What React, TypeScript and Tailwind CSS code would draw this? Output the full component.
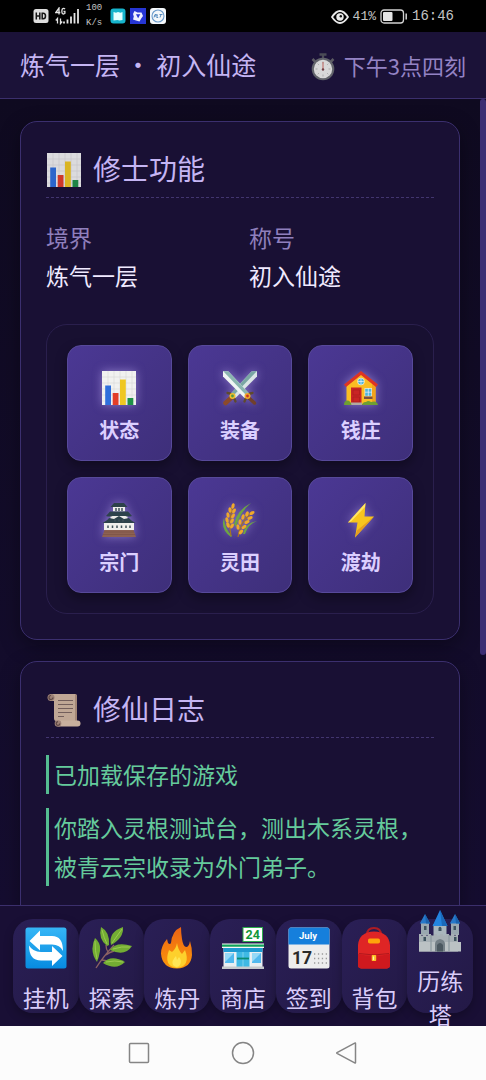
import React from "react";

type IconProps = { className?: string };

function ChartIcon({ className }: IconProps) {
  return (
    <svg viewBox="0 0 36 36" className={className} aria-hidden="true">
      <rect x="1" y="1" width="34" height="34" fill="#f1f1f0" />
      <path d="M7 1v34M13 1v34M19 1v34M25 1v34M31 1v34M1 7h34M1 13h34M1 19h34M1 25h34M1 31h34" stroke="#dadada" strokeWidth="0.700" />
      <rect x="4.200" y="15.500" width="5.800" height="19.500" fill="#2f6fdc" />
      <rect x="11.700" y="23" width="5.800" height="12" fill="#e23d28" />
      <rect x="19" y="9.500" width="5.800" height="25.500" fill="#efc722" />
      <rect x="26.500" y="28" width="5.800" height="7" fill="#1f9147" />
    </svg>
  );
}

function ScrollIcon({ className }: IconProps) {
  return (
    <svg viewBox="0 0 36 36" className={className} aria-hidden="true">
      <path d="M4 2h25q2 0 2 3v24H10q-2 0-2-3V9H4z" fill="#d3b8a0" />
      <path d="M29 2q2 0 2 3v24h-2z" fill="#b3947f" />
      <circle cx="5" cy="5.500" r="3.500" fill="#a98c7c" />
      <path d="M5 3.500a2 2 0 1 0 2 2" fill="none" stroke="#654d46" strokeWidth="1.200" />
      <path d="M12 8.500h15M12 12.500h15M12 16.500h15M12 20.500h14M12 24.500h6" stroke="#7d6760" strokeWidth="1.200" />
      <rect x="10" y="28.500" width="24.500" height="6" rx="3" fill="#dcc2aa" />
      <circle cx="12" cy="31.500" r="3.300" fill="#ad8f7e" />
      <path d="M12 29.700a1.800 1.800 0 1 0 1.800 1.800" fill="none" stroke="#654d46" strokeWidth="1.200" />
    </svg>
  );
}

function SwordsIcon({ className }: IconProps) {
  return (
    <svg viewBox="0 0 36 36" className={className} aria-hidden="true">
      <path d="M35 1v5.500L13.500 28 9 23.500 29.500 1.500z" fill="#dbe6e6" />
      <path d="M35 1l-5.500.5L9 23.500l2.300 2.300z" fill="#7aa7a4" />
      <path d="M1 1v5.500L22.500 28l4.500-4.500L6.500 1.500z" fill="#f0f5f4" />
      <path d="M1 1l5.500.5L27 23.500l-2.300 2.300z" fill="#8ab5b0" />
      <path d="M9 28l-5.500 5" stroke="#8c4a2b" strokeWidth="4.500" strokeLinecap="round" />
      <path d="M27 28l5.500 5" stroke="#71402b" strokeWidth="3.500" strokeLinecap="round" />
      <path d="M5.500 23q5 0 8 8.500M30.500 23q-5 0-8 8.500" fill="none" stroke="#5f4a2c" strokeWidth="2.300" strokeLinecap="round" />
      <circle cx="10.500" cy="26" r="3" fill="#f0bd2e" />
      <circle cx="25.500" cy="26" r="3" fill="#f0a82e" />
      <circle cx="10.500" cy="26" r="1.400" fill="#4d9b48" />
      <circle cx="25.500" cy="26" r="1.400" fill="#c63527" />
    </svg>
  );
}

function HouseIcon({ className }: IconProps) {
  return (
    <svg viewBox="0 0 36 36" className={className} aria-hidden="true">
      <path d="M3.500 14L18 3l14.500 12v19h-29z" fill="#fbbd22" />
      <path d="M27 10l5.500 5v19H29V13z" fill="#f2a31b" />
      <path d="M18 1L1 14.500l2 2.500L18 5l15 12 2-2.500z" fill="#dd3423" />
      <circle cx="18" cy="11.500" r="3.700" fill="#f6ebc8" />
      <circle cx="18" cy="11.500" r="2.900" fill="#4fb6da" />
      <path d="M18 8.600v5.800M15.100 11.500h5.800" stroke="#eef" strokeWidth="0.700" />
      <rect x="8" y="17.500" width="10.500" height="16" fill="#c92424" />
      <path d="M10 20h6.500v5H10zM10 27h6.500v5H10z" fill="none" stroke="#ab1d1d" strokeWidth="0.700" />
      <rect x="21.500" y="18" width="7.500" height="8.500" fill="#f6ebc8" />
      <rect x="22.200" y="18.800" width="6.100" height="7" fill="#4fb6da" />
      <path d="M25.300 18v8.500M22 22.200h7" stroke="#eef" strokeWidth="0.700" />
      <path d="M21 26.500h8.500V29H21z" fill="#7b5040" />
      <path d="M8 32.500h11V35H8z" fill="#b2a9a0" />
      <path d="M1 35q0-4.500 3.500-4.500 3 0 4 4.500zM19 35q1-3.500 4-3 2-2 5 0 6-2 7 3z" fill="#6e9f32" />
    </svg>
  );
}

function PagodaIcon({ className }: IconProps) {
  return (
    <svg viewBox="0 0 36 36" className={className} aria-hidden="true">
      <path d="M3.500 28h29l2.500 7H1z" fill="#8d6152" />
      <path d="M3 30h30M2 32.500h32" stroke="#774f43" strokeWidth="0.600" />
      <path d="M3 20h30v8H3z" fill="#f1f0ed" />
      <path d="M9.500 14h17v6h-17z" fill="#ecebe7" />
      <path d="M12 5h12v4.500H12z" fill="#efeeeb" />
      <path d="M13 1l-3.500 4h17L23 1zM9 9.500h18l4 4.500q-4 1-6.500 0h-13q-2.500 1-6.500 0zM8 16q-1 2-6.500 5h33q-5.500-3-6.500-5l-5 1-5-3-5 3z" fill="#2d424b" />
      <path d="M15 6v3M18 6v3M21 6v3M14 17.500v2M18 17.500v2M22 17.500v2M7 23.500v2.500M11.500 23.500v2.500M16 23.500v2.500M20.500 23.500v2.500M25 23.500v2.500M29 23.500v2.500" stroke="#40525b" strokeWidth="1.500" />
    </svg>
  );
}

function WheatIcon({ className }: IconProps) {
  const grains = [
    [11, 4, 15], [8, 8, -5], [12, 9, 30], [6, 13, -10], [11, 14, 30], [5, 18, -15], [10, 19, 30], [6, 23, -20], [10, 24, 30],
    [30, 11, 60], [25, 12, 25], [28, 16, 70], [21, 15, 15], [25, 20, 65], [18, 20, 5], [22, 25, 55], [16, 25, -5], [19, 30, 45],
  ];
  return (
    <svg viewBox="0 0 36 36" className={className} aria-hidden="true">
      <path d="M12 22Q15 8 29 1q-11 9-15 24zM21 32q2-11 14-13-9 3-12 13zM9 35Q-2 27 2 16q1 11 8 18z" fill="#6da544" />
      <path d="M9 34Q6 20 11 4M16 35Q18 20 30 10" fill="none" stroke="#a9741f" strokeWidth="1.200" />
      {grains.map(([x, y, r]) => (
        <ellipse key={`${x}-${y}`} cx={x} cy={y} rx="1.600" ry="2.800" transform={`rotate(${r} ${x} ${y})`} fill="#f0a92a" />
      ))}
    </svg>
  );
}

function BoltIcon({ className }: IconProps) {
  return (
    <svg viewBox="0 0 36 36" className={className} aria-hidden="true">
      <path d="M22.500 1L5 20.500h9.500L12 35.500 31 14.500h-9.500z" fill="#f8c51d" />
      <path d="M22.500 1L5 20.500l3-1L22 5z" fill="#ffe765" />
      <path d="M31 14.500L12 35.500l2-7z" fill="#e69d20" />
    </svg>
  );
}

function StopwatchIcon({ className }: IconProps) {
  return (
    <svg viewBox="0 0 26 28" className={className} aria-hidden="true">
      <path d="M9.500 1.500h7M13 2v4" stroke="#4b4c56" strokeWidth="2.300" />
      <path d="M2.500 6l3 3M23.500 6l-3 3" stroke="#5c5b63" strokeWidth="2.500" />
      <circle cx="13" cy="16" r="11.300" fill="#62646b" />
      <circle cx="13" cy="16" r="9.200" fill="#d8d8d8" />
      <path d="M13 8.500v2M13 21.500v2M5.500 16h2M18.500 16h2M7.700 10.700l1.200 1.200M18.300 10.700l-1.200 1.200M7.700 21.300l1.200-1.200M18.300 21.300l-1.200-1.200" stroke="#9a9a9a" strokeWidth="0.700" />
      <path d="M13 9v7.500" stroke="#bb635d" strokeWidth="1" />
      <circle cx="13" cy="16.500" r="1.200" fill="#714045" />
    </svg>
  );
}

function CycleIcon({ className }: IconProps) {
  return (
    <svg viewBox="0 0 42 42" className={className} aria-hidden="true">
      <defs>
        <linearGradient id="cycle-bg" x1="0" y1="0" x2="0" y2="1">
          <stop offset="0" stopColor="#35b6f6" />
          <stop offset="1" stopColor="#078be0" />
        </linearGradient>
      </defs>
      <rect x="0.500" y="0.500" width="41" height="41" rx="2.500" fill="url(#cycle-bg)" />
      <path d="M4.500 14L15 3.500V9h12q11 0 11 15-3-6.500-11-6.500H15v6z" fill="#fff" />
      <path d="M37.500 29L27 39v-5.500H16Q4 33.500 4 18.500q4 6.500 12 6.500h11v-6z" fill="#fff" />
    </svg>
  );
}

function HerbIcon({ className }: IconProps) {
  return (
    <svg viewBox="0 0 42 42" className={className} aria-hidden="true">
      <path d="M5 41Q12 30 23 18M17 25q-2-3-2-7M15 28q4-3 8-4M11 33l6 1" fill="none" stroke="#8b6263" strokeWidth="1.300" />
      <g fill="#73ad33">
        <path d="M6 35Q-2 24 4 11q6 5 5 13-1 6-3 11z" />
        <path d="M16 19Q7 12 10 0q9 5 8 18z" />
        <path d="M20 18Q17 5 32 0q1 11-12 18z" />
        <path d="M19 23q6-9 22-4-7 11-22 4z" />
        <path d="M12 36q8-9 22-1-9 9-22 1z" />
      </g>
      <path d="M4 14q0 10 2 18M11 3q2 8 5 14M31 2L21 16M22 22q9-3 17-2M15 35q9-2 17 0" fill="none" stroke="#a0cc55" strokeWidth="0.900" />
    </svg>
  );
}

function FireIcon({ className }: IconProps) {
  return (
    <svg viewBox="0 0 42 42" className={className} aria-hidden="true">
      <defs>
        <linearGradient id="fire-outer" x1="0" y1="0" x2="0" y2="1">
          <stop offset="0" stopColor="#ec6213" />
          <stop offset="1" stopColor="#fb980c" />
        </linearGradient>
      </defs>
      <path d="M25 0q-9 4-10 16-1 2-3 0l-1-4Q5 19 5 26.500 6 41 21 41.500 35 41 36 28q0-8-2-14-1 6-4 6-3-1-4-8-1-7-1-12z" fill="url(#fire-outer)" />
      <path d="M21 16q-1 6-5 9l-3-2q-6 16 8 18 14-2 8-18l-3 4q-4-4-5-11z" fill="#fdd02c" />
      <path d="M20 29q-5 5-3 9 4 4 7 0 2-5-1-8l-2 3z" fill="#ffe655" />
    </svg>
  );
}

function StoreIcon({ className }: IconProps) {
  return (
    <svg viewBox="0 0 42 42" className={className} aria-hidden="true">
      <rect x="1.500" y="20" width="39" height="20" fill="#e9eef1" />
      <path d="M0 16.500h42V21H0z" fill="#f7f7f7" />
      <path d="M0 17.500h42v2.300H0z" fill="#11a35a" />
      <path d="M1.500 21h39v4h-39z" fill="#1f9bd2" />
      <path d="M3 26h9v10H3zM30 26h9v10h-9z" fill="#51b9ee" />
      <path d="M3 26h9L3 35zM30 26h9l-9 9z" fill="#95d9f7" />
      <path d="M14 25h14v15H14z" fill="#3fb9e4" />
      <path d="M14 25v15M28 25v15" stroke="#e7f6fc" strokeWidth="1" />
      <path d="M21 25v15" stroke="#a5e2f5" strokeWidth="0.600" />
      <path d="M15 31.500h12" stroke="#0a8b72" strokeWidth="1.800" />
      <path d="M0 39.500h42V42H0z" fill="#c5c9cc" />
      <rect x="21" y="0.500" width="19.500" height="14" fill="#fff" stroke="#2cae4b" strokeWidth="1" />
      <text x="30.700" y="12" textAnchor="middle" fontFamily="Roboto, sans-serif" fontSize="12.500" fontWeight="700" fill="#12963a">24</text>
    </svg>
  );
}

function CalendarIcon({ className }: IconProps) {
  return (
    <svg viewBox="0 0 42 42" className={className} aria-hidden="true">
      <rect x="0.500" y="0.500" width="41" height="41" rx="2.500" fill="#ededed" />
      <path d="M0.500 17.500V3q0-2.500 2.500-2.500h36q2.500 0 2.500 2.500v14.500z" fill="#167fdc" />
      <text x="20" y="12" textAnchor="middle" fontFamily="Roboto, sans-serif" fontSize="9.500" fontWeight="700" fill="#fff">July</text>
      <text x="14" y="37" textAnchor="middle" fontFamily="Roboto, sans-serif" fontSize="17.500" fontWeight="700" fill="#292929">17</text>
      <path d="M26 27h13M26 31.500h13M26 36h13" stroke="#9b9b9b" strokeWidth="1.300" strokeDasharray="1.300 2.600" />
    </svg>
  );
}

function BackpackIcon({ className }: IconProps) {
  return (
    <svg viewBox="0 0 42 42" className={className} aria-hidden="true">
      <path d="M14 8q0-7 7-7t7 7" fill="none" stroke="#ae1c23" strokeWidth="2" />
      <path d="M5 18Q6 5 21 4.500 36 5 37 18v20q0 3-3 3.500H8Q5 41 5 38z" fill="#df2525" />
      <path d="M5 27q16 4 32 0v11q0 3-3 3.500H8Q5 41 5 38z" fill="#cf191e" />
      <path d="M6 26.500q15 3 30 0" fill="none" stroke="#ac161b" strokeWidth="0.900" />
      <rect x="15" y="11.500" width="12" height="5" rx="1.800" fill="#ffa30b" />
      <rect x="18.700" y="28" width="4.500" height="6" rx="0.800" fill="#fcc327" />
      <path d="M20.500 29.500v3.500" stroke="#fff0b0" strokeWidth="1.200" />
    </svg>
  );
}

function CastleIcon({ className }: IconProps) {
  return (
    <svg viewBox="0 0 42 42" className={className} aria-hidden="true">
      <path d="M2 13h8v12H2zM32 13h8v12h-8z" fill="#9aa8b0" />
      <path d="M14.500 14h13v14h-13z" fill="#a9b6bd" />
      <path d="M0 24h2v1.500h2V24h3v1.500h2V24h3v1.500h3V24h3v1.500h3V24h3v1.500h3V24h3v1.500h2V24h3v1.500h2V24h2v17.500H0z" fill="#a7b0b5" />
      <path d="M0 32h42v9.500H0z" fill="#bbc2c4" />
      <path d="M12 25v16M30 25v16" stroke="#8b989f" strokeWidth="1.200" />
      <path d="M6 4L0.800 13.500h10.400zM36 4l-5.200 9.500h10.400z" fill="#2678c9" />
      <path d="M6 4l1 9.500h4.200zM36 4l1 9.500h4.200z" fill="#1a62ae" />
      <path d="M21 0l-7.500 16h15z" fill="#2384df" />
      <path d="M21 0l2 16h5.500z" fill="#1a69ba" />
      <path d="M5 16h2.500v4H5zM34.500 16H37v4h-2.500zM19.500 21v-3q1.500-2.500 3 0v3zM4.500 27H7v4H4.500zM35 27h2.500v4H35z" fill="#3d525e" />
      <path d="M16 41.500V34q0-4 5-5 5 1 5 5v7.500z" fill="#737f86" />
      <path d="M18 41.500V35q3-4 6 0v6.500z" fill="#4b5860" />
    </svg>
  );
}

const stats = [
  { label: "境界", value: "炼气一层" },
  { label: "称号", value: "初入仙途" },
];

const features = [
  { icon: ChartIcon, label: "状态" },
  { icon: SwordsIcon, label: "装备" },
  { icon: HouseIcon, label: "钱庄" },
  { icon: PagodaIcon, label: "宗门" },
  { icon: WheatIcon, label: "灵田" },
  { icon: BoltIcon, label: "渡劫" },
];

const logs = ["已加载保存的游戏", "你踏入灵根测试台，测出木系灵根，被青云宗收录为外门弟子。"];

const tabs = [
  { icon: CycleIcon, label: "挂机" },
  { icon: HerbIcon, label: "探索" },
  { icon: FireIcon, label: "炼丹" },
  { icon: StoreIcon, label: "商店" },
  { icon: CalendarIcon, label: "签到" },
  { icon: BackpackIcon, label: "背包" },
  { icon: CastleIcon, label: "历练塔" },
];

function StatusBar() {
  return (
    <div className="flex h-8 shrink-0 items-center justify-between bg-black pr-8 pl-8 font-['Liberation_Mono',monospace] text-[#c4c4c4]">
      <div className="flex items-center gap-1">
        <svg viewBox="0 0 16 14" className="mr-[2px] ml-px h-[14px] w-4" role="img" aria-label="HD">
          <rect x="0.500" width="15" height="14" rx="2.500" fill="#dedede" />
          <path d="M3.300 3.500v7M6.800 3.500v7M3.300 7h3.500M9.200 4.200v5.600h1q2.300 0 2.300-2.800t-2.300-2.800z" fill="none" stroke="#151515" strokeWidth="1.500" />
        </svg>
        <svg viewBox="0 0 26 18" className="h-[18px] w-[26px]" role="img" aria-label="4G">
          <path d="M4 7.500V1L0.800 5.500h4.500M10 2.200Q8.700 0.600 7.300 2q-.9 2.300 0 4.400 1.400 1.200 2.600 0V4.500H8.500" fill="none" stroke="#e4e4e4" strokeWidth="1.300" />
          <path d="M2.500 16.500v-5L0.800 13.500M5.500 11.500v5l1.700-2" fill="none" stroke="#e4e4e4" strokeWidth="1.300" />
          <path d="M9 16.500v-2M12.500 16.500v-4M16 16.500V9.500M19.500 16.500V6M23 16.500V2" stroke="#e4e4e4" strokeWidth="1.800" />
        </svg>
        <div className="ml-px flex flex-col text-[9px] leading-[15px]">
          <span>100</span>
          <span>K/s</span>
        </div>
        <svg viewBox="0 0 16 16" className="ml-1 h-4 w-4" aria-hidden="true">
          <rect x="0.500" y="0.500" width="15" height="15" rx="3" fill="#16b4cc" />
          <path d="M3.500 4l2.500.8L8 4l2.500.8L12.500 4v8l-3 .6-2-.6-4 .6z" fill="#e4ffff" />
        </svg>
        <svg viewBox="0 0 16 16" className="h-4 w-4" aria-hidden="true">
          <rect width="16" height="16" fill="#2636d4" />
          <path d="M4.500 3l3 1.500h4L13 8l-1.800 2.500L9.500 13.500 6 12.500l-3-1 .8-3L3 6z" fill="#eef0ff" />
          <path d="M6 6.300h4.300l-2.200 4z" fill="#2636d4" />
        </svg>
        <svg viewBox="0 0 16 16" className="h-4 w-4" aria-hidden="true">
          <rect width="16" height="16" rx="3" fill="#f5f8fb" />
          <circle cx="8" cy="8" r="6" fill="none" stroke="#6b9bcb" strokeWidth="1.100" />
          <path d="M4 9.500l1-3h1.500l-.5 1.500H4.500M7.500 6.500l-.8 3h1.500M9.500 6.500h3M11 6.500l-1 3" fill="none" stroke="#4a82ba" strokeWidth="0.900" />
        </svg>
      </div>
      <div className="flex items-center gap-1 pt-px">
        <svg viewBox="0 0 18 14" className="h-[14px] w-[18px]" aria-hidden="true">
          <path d="M1 7q8-12 16 0-8 12-16 0z" fill="none" stroke="#eaeaea" strokeWidth="1.800" />
          <circle cx="9" cy="7" r="3.700" fill="#eaeaea" />
          <circle cx="9.800" cy="6.200" r="1.200" fill="#111" />
        </svg>
        <span className="text-[13px]">41%</span>
        <svg viewBox="0 0 28 15" className="h-[15px] w-7" aria-hidden="true">
          <rect x="1" y="1" width="22.500" height="13" rx="3" fill="none" stroke="#d2d2d2" strokeWidth="1.300" />
          <rect x="3" y="3" width="9.500" height="9" rx="1" fill="#e5e5e5" />
          <path d="M26.200 4.500v6" stroke="#d2d2d2" strokeWidth="1.500" />
        </svg>
        <span className="text-[14px]">16:46</span>
      </div>
    </div>
  );
}

function Card({ icon: Icon, title, children }: { icon: React.ComponentType<IconProps>; title: string; children: React.ReactNode }) {
  return (
    <section className="shrink-0 rounded-[17px] border border-[#3b2f6e] bg-[#191034] p-[25px] shadow-[0_6px_20px_rgba(0,0,0,0.35)]">
      <h2 className="flex items-center gap-[11px] border-b border-dashed border-[#42356f] pb-2 text-[28px] leading-[42px] text-[#c5b5f3]">
        <Icon className="mt-1 h-9 w-9 opacity-90" />
        {title}
      </h2>
      {children}
    </section>
  );
}

function SystemNav() {
  return (
    <div className="relative z-10 flex h-[54px] shrink-0 items-center justify-center gap-20 bg-[#fcfcfc] text-[#858585]">
      <button type="button" aria-label="最近任务">
        <svg viewBox="0 0 24 24" className="h-6 w-6">
          <rect x="2.500" y="2.500" width="19" height="19" rx="1" fill="none" stroke="currentColor" strokeWidth="1.500" />
        </svg>
      </button>
      <button type="button" aria-label="主屏幕">
        <svg viewBox="0 0 24 24" className="h-6 w-6">
          <circle cx="12" cy="12" r="10.500" fill="none" stroke="currentColor" strokeWidth="1.500" />
        </svg>
      </button>
      <button type="button" aria-label="返回">
        <svg viewBox="0 0 24 24" className="h-6 w-6">
          <path d="M20.500 2.500v19q0 .8-.8.400L2 12.400q-.6-.4 0-.8L19.700 2.100q.8-.4.800.4z" fill="none" stroke="currentColor" strokeWidth="1.500" />
        </svg>
      </button>
    </div>
  );
}

export default function App() {
  return (
    <div className="flex h-screen flex-col overflow-hidden bg-[#120b28] font-['Noto_Sans_CJK_SC',sans-serif]">
      <StatusBar />
      <header className="flex h-[67px] shrink-0 items-center justify-between border-b border-[#3b2f6c] bg-[#1b1238] px-5">
        <h1 className="text-[25px] text-[#c5b5f3]">炼气一层 • 初入仙途</h1>
        <div className="flex items-center gap-2 text-[22px] text-[#9483c4]">
          <StopwatchIcon className="mt-1 h-7 w-[26px]" />
          下午3点四刻
        </div>
      </header>

      <main className="flex min-h-0 flex-1 bg-linear-to-b from-[#0f0a20] to-[#150d30]">
        <div className="flex min-w-0 flex-1 flex-col gap-[21px] overflow-y-auto px-5 pt-[22px] pb-5 [scrollbar-width:none]">
          <Card icon={ChartIcon} title="修士功能">
            <dl className="mt-5 grid grid-cols-2 gap-[18px] text-[23px] leading-[38px]">
              {stats.map((stat) => (
                <div key={stat.label}>
                  <dt className="text-[#8f7fbc]">{stat.label}</dt>
                  <dd className="text-[#f0eaff]">{stat.value}</dd>
                </div>
              ))}
            </dl>
            <div className="mt-[30px] grid grid-cols-3 gap-4 rounded-[21px] border border-[#2a1f4d] bg-[#181031] p-5">
              {features.map(({ icon: Icon, label }) => (
                <button
                  key={label}
                  type="button"
                  className="flex h-[116px] flex-col items-center justify-center gap-[10px] rounded-[14px] border border-[#57499a] bg-linear-to-br from-[#4b3894] to-[#3e2f7a] pt-2 text-[20px] leading-7 font-bold text-[#dccfff] shadow-[0_5px_12px_rgba(0,0,0,0.35)]"
                >
                  <Icon className="h-9 w-9 drop-shadow-[0_0_5px_rgba(205,185,255,0.5)]" />
                  {label}
                </button>
              ))}
            </div>
          </Card>

          <Card icon={ScrollIcon} title="修仙日志">
            <div className="mt-[17px] flex min-h-[240px] flex-col gap-[14px]">
              {logs.map((log) => (
                <p key={log} className="border-l-[3px] border-[#55bd91] pl-[5px] text-[23px] leading-[39px] text-[#65cb9c]">
                  {log}
                </p>
              ))}
            </div>
          </Card>
        </div>
        <div className="w-[6px] shrink-0 bg-[#120a2a]" aria-hidden="true">
          <div className="h-[69%] rounded-[3px] bg-[#3c2e73]" />
        </div>
      </main>

      <nav className="flex shrink-0 border-t border-[#3b2f6c] bg-[#190f35] p-[13px]">
        {tabs.map(({ icon: Icon, label }) => (
          <button
            key={label}
            type="button"
            className="flex h-[94px] min-w-0 flex-1 flex-col items-center justify-center rounded-[20px] bg-linear-to-br from-[#2a1f56] to-[#231946] pb-[2px] text-[23px] leading-[34px] text-[#d9ccfa] shadow-[0_4px_10px_rgba(0,0,0,0.25)]"
          >
            <span className="flex h-16 shrink-0 items-center">
              <Icon className="h-[42px] w-[42px]" />
            </span>
            <span className="shrink-0">{label}</span>
          </button>
        ))}
      </nav>
      <SystemNav />
    </div>
  );
}
